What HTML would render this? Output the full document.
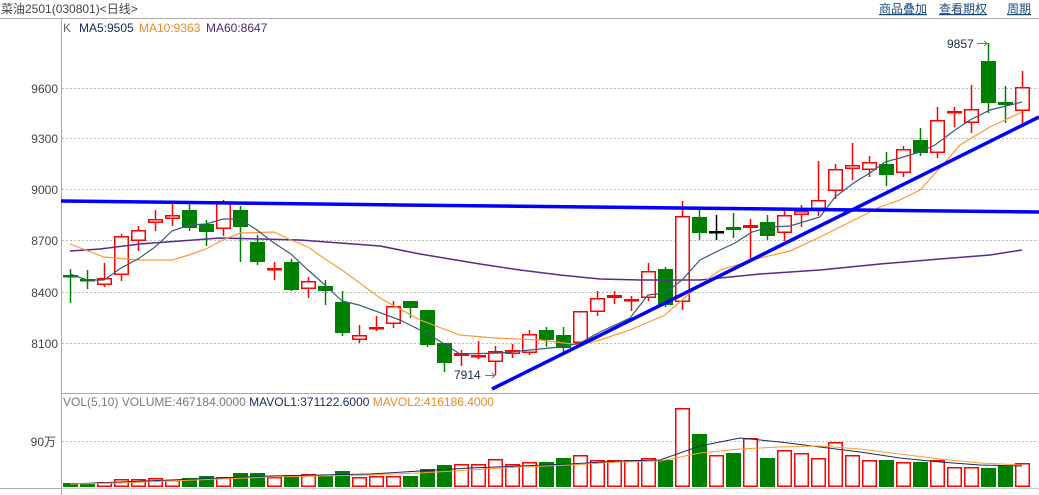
<!DOCTYPE html>
<html><head><meta charset="utf-8"><style>
body{margin:0;width:1039px;height:495px;overflow:hidden;background:#fff;font-family:"Liberation Sans","Noto Sans CJK SC",sans-serif;}
svg{position:absolute;left:0;top:0}
</style></head><body>
<svg width="1039" height="495" viewBox="0 0 1039 495" font-family="Liberation Sans, Noto Sans CJK SC, sans-serif">
<text x="1" y="13" font-size="12" fill="#444">菜油2501(030801)&lt;日线&gt;</text>
<g font-size="12" fill="#1a4a7a" text-decoration="underline">
<text x="879" y="13">商品叠加</text><text x="939" y="13">查看期权</text><text x="1007" y="13">周期</text></g>
<line x1="0" y1="18.5" x2="1039" y2="18.5" stroke="#aaa"/>
<line x1="61.5" y1="18" x2="61.5" y2="495" stroke="#aaa"/>
<line x1="61" y1="393.5" x2="1039" y2="393.5" stroke="#aaa"/>
<line x1="0" y1="488.5" x2="61" y2="488.5" stroke="#aaa"/>
<line x1="61" y1="488.5" x2="1039" y2="488.5" stroke="#ccc"/>
<g font-size="12" fill="#222">
<text x="63" y="32" fill="#667">K</text>
<text x="79" y="32" fill="#1a2a6a">MA5:9505</text>
<text x="139" y="32" fill="#f08a20">MA10:9363</text>
<text x="206" y="32" fill="#4a2a7a">MA60:8647</text>
</g>
<g stroke="#bbb" stroke-dasharray="2,2">
<line x1="62" y1="88.5" x2="1039" y2="88.5"/><line x1="62" y1="138.5" x2="1039" y2="138.5"/>
<line x1="62" y1="189.5" x2="1039" y2="189.5"/><line x1="62" y1="240.5" x2="1039" y2="240.5"/>
<line x1="62" y1="292.5" x2="1039" y2="292.5"/><line x1="62" y1="343.5" x2="1039" y2="343.5"/>
<line x1="62" y1="441.5" x2="1039" y2="441.5"/>
</g>
<g font-size="12" fill="#444" text-anchor="end">
<text x="58" y="93">9600</text><text x="58" y="143">9300</text><text x="58" y="194">9000</text>
<text x="58" y="245">8700</text><text x="58" y="297">8400</text><text x="58" y="348">8100</text>
<text x="56" y="446">90万</text>
</g>
<text x="63" y="406" font-size="12" fill="#778">VOL(5,10) VOLUME:467184.0000 <tspan fill="#1a2a5a">MAVOL1:371122.6000</tspan> <tspan fill="#f08a20">MAVOL2:416186.4000</tspan></text>
<g id="c" stroke-width="1.5"></g>
<polyline fill="none" stroke="#5a2a8a" stroke-width="1.5" points="70,251 100,249 140,244 180,241 220,238 260,239 300,240 340,243 380,246 420,254 480,264 520,270 560,275 600,279 640,280 700,280 760,274 820,270 880,264 940,259 990,255 1022,250"/>
<polyline fill="none" stroke="#ff9933" stroke-width="1.2" points="70,244 104,257 138,260 172,260 189,255 206,249 223,240 240,233 274,232 291,240 308,247 325,259 342,270 380,298 420,320 460,335 495,338 540,340 580,345 600,340 630,330 665,315 682,300 700,285 720,270 760,258 790,251 820,237 850,222 880,207 900,200 920,190 940,168 960,145 990,127 1022,112"/>
<polyline fill="none" stroke="#3a5a7a" stroke-width="1.2" points="70,274 87,280 104,280 121,268 138,259 155,247 172,231 189,225 206,224 223,219 240,219 257,230 274,243 291,254 308,270 325,285 342,301 359,305 400,320 430,335 460,354 500,353 530,350 560,347 580,343 600,332 630,318 648,295 665,293 682,280 700,260 720,250 735,243 752,232 770,227 790,226 820,217 835,197 855,182 870,173 885,162 900,158 920,152 935,145 955,130 970,120 990,110 1022,102"/>
<polyline fill="none" stroke="#0000ff" stroke-width="3.5" points="61,201 400,205 680,208 1039,212"/>
<line x1="492" y1="389" x2="1039" y2="117" stroke="#0000ff" stroke-width="3.5"/>
<g font-size="12" fill="#1a2a4a">
<text x="947" y="48">9857</text><text x="454" y="379">7914</text></g>
<g stroke="#777" fill="none"><line x1="977" y1="43.5" x2="987" y2="43.5"/><polyline points="984,41 987,43.5 984,46"/><line x1="485" y1="375.5" x2="495" y2="375.5"/><polyline points="492,373 495,375.5 492,378"/></g>
<g id="v"></g>
<polyline fill="none" stroke="#1a2a5a" stroke-width="1" points="70,484 120,482 170,480 220,478 270,476 320,475 370,474 420,471 470,468 520,466 570,464 620,461 660,460 700,446 740,438 780,442 820,447 860,452 900,458 940,462 980,465 1022,466"/>
<polyline fill="none" stroke="#ff9933" stroke-width="1" points="70,484 120,483 170,481 220,479 270,477 320,476 370,475 420,473 470,470 520,467 570,465 620,462 660,461 700,453 740,449 780,447 820,446 860,449 900,454 940,459 980,463 1022,465"/>
</svg>
<script>
var C=[["g",275,276,269,303],["g",279,281,270,289],["r",278,285,263,287],["r",236,275,234,281],["r",230,241,226,251],["r",219,223,210,231],["r",215,219,202,226],["g",210,228,203,231],["g",224,232,220,246],["r",203,229,200,236],["g",210,227,206,262],["g",242,262,235,265],["r",268,270,262,280],["g",262,290,259,291],["r",281,289,277,298],["g",286,291,280,305],["g",302,333,291,336],["r",335,340,325,343],["r",327,329,316,331],["r",306,324,301,328],["g",301,308,301,318],["g",310,345,310,347],["g",343,363,343,372],["r",353,356,350,366],["r",355,357,341,359],["r",351,362,346,375],["r",350,354,344,358],["r",334,353,330,355],["g",330,340,327,347],["g",335,348,327,355],["r",311,343,311,343],["r",298,312,291,316],["r",295,298,291,304],["r",299,301,296,311],["r",271,298,263,301],["g",269,305,267,307],["r",216,302,201,310],["g",217,233,208,240],["k",231,232,215,240],["g",227,230,213,238],["r",225,228,219,259],["g",222,236,215,240],["r",215,233,210,241],["r",211,215,205,227],["r",200,209,161,216],["r",169,191,164,199],["r",165,169,143,180],["r",162,170,156,177],["g",164,175,152,186],["r",149,173,146,177],["g",140,153,128,156],["r",120,153,107,158],["r",111,113,107,127],["r",109,123,85,133],["g",61,103,43,113],["g",102,105,86,123],["r",87,111,71,127]];
var V=[483,483,482,479,479,478,480,478,476,477,473,473,477,475,474,476,471,477,476,476,476,469,465,464,464,459,464,462,462,458,455,460,460,460,458,460,408,434,455,453,438,458,450,453,458,442,455,460,460,462,462,460,467,467,468,466,463];
var s="",v="";
C.forEach(function(c,i){var x=70+17*i,col=c[0]=="g"?"#008000":c[0]=="r"?"#ff0000":"#000";
s+='<line x1="'+(x+.5)+'" y1="'+c[3]+'" x2="'+(x+.5)+'" y2="'+c[4]+'" stroke="'+col+'"/>';
var h=c[2]-c[1];
if(h<3){s+='<rect x="'+(x-7)+'" y="'+c[1]+'" width="15" height="2.5" fill="'+col+'"/>';}
else if(c[0]=="g"){s+='<rect x="'+(x-7)+'" y="'+c[1]+'" width="15" height="'+h+'" fill="'+col+'"/>';}
else{s+='<rect x="'+(x-6.25)+'" y="'+(c[1]+.75)+'" width="13.5" height="'+(h-1.5)+'" fill="#fff" stroke="'+col+'"/>';}
var t=V[i],vh=487-t;
if(c[0]=="g")v+='<rect x="'+(x-7)+'" y="'+t+'" width="15" height="'+vh+'" fill="#008000"/>';
else v+='<rect x="'+(x-6.25)+'" y="'+(t+.75)+'" width="13.5" height="'+(vh-1.5)+'" fill="#fff" stroke="#ff0000" stroke-width="1.5"/>';
});
document.getElementById("c").innerHTML=s;document.getElementById("v").innerHTML=v;
</script>
</body></html>
